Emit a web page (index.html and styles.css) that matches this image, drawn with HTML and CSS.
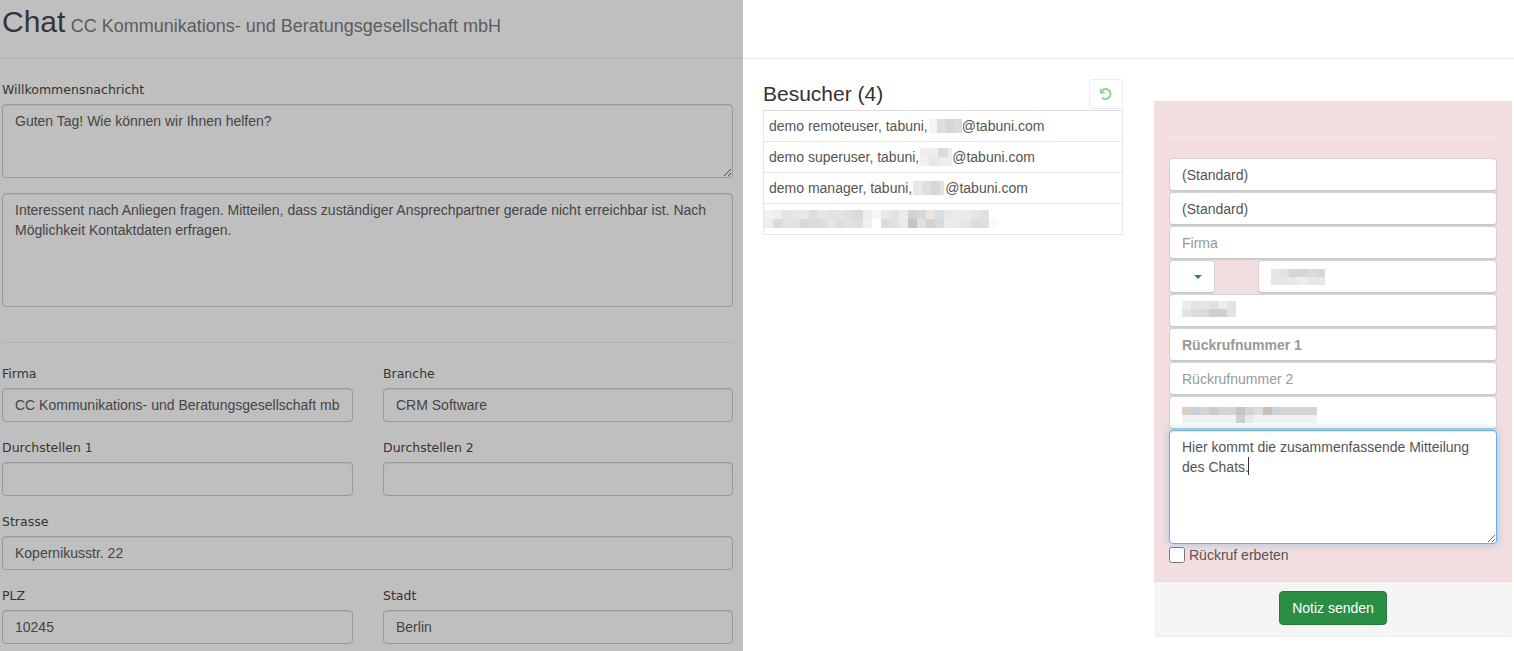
FILE: index.html
```html
<!DOCTYPE html>
<html lang="de">
<head>
<meta charset="utf-8">
<title>Chat</title>
<link rel="stylesheet" href="styles.css">
</head>
<body>
<header class="page-header">
  <h1 class="title">Chat <small class="subtitle">CC Kommunikations- und Beratungsgesellschaft mbH</small></h1>
</header>
<main class="layout">
  <section class="script-col">
    <div class="group">
      <label class="label">Willkommensnachricht</label>
      <textarea class="control area-welcome">Guten Tag! Wie können wir Ihnen helfen?</textarea>
    </div>
    <textarea class="control area-hint">Interessent nach Anliegen fragen. Mitteilen, dass zuständiger Ansprechpartner gerade nicht erreichbar ist. Nach Möglichkeit Kontaktdaten erfragen.</textarea>
    <hr class="rule">
    <div class="form-grid">
      <div class="group"><label class="label">Firma</label><input class="control" value="CC Kommunikations- und Beratungsgesellschaft mbH"></div>
      <div class="group"><label class="label">Branche</label><input class="control" value="CRM Software"></div>
      <div class="group"><label class="label">Durchstellen 1</label><input class="control"></div>
      <div class="group"><label class="label">Durchstellen 2</label><input class="control"></div>
      <div class="group wide"><label class="label">Strasse</label><input class="control" value="Kopernikusstr. 22"></div>
      <div class="group"><label class="label">PLZ</label><input class="control" value="10245"></div>
      <div class="group"><label class="label">Stadt</label><input class="control" value="Berlin"></div>
    </div>
  </section>

  <section class="visitor-col">
    <div class="visitor-head">
      <h3 class="visitor-title">Besucher (4)</h3>
      <button class="refresh" type="button" aria-label="Aktualisieren">
        <svg width="14" height="14" viewBox="0 0 14 14" fill="none"><path d="M3.6 3.2A4.9 4.9 0 1 1 3 10.4" stroke="#5cb85c" stroke-width="2.2"/><path d="M1 1V6.6H6.6Z" fill="#5cb85c"/></svg>
      </button>
    </div>
    <ul class="visitor-list">
      <li class="visitor">demo remoteuser, tabuni,<svg class="mask" width="33" height="14" shape-rendering="crispEdges"><rect width="8" height="14" fill="#f6f5f5"/><rect x="8" width="9" height="14" fill="#dedede"/><rect x="17" width="8" height="14" fill="#d6d6d9"/><rect x="25" width="8" height="14" fill="#dcdadb"/></svg>@tabuni.com</li>
      <li class="visitor">demo superuser, tabuni,<svg class="mask" width="32" height="18" shape-rendering="crispEdges"><rect width="32" height="18" fill="#efeeef"/><rect x="18" width="10" height="9" fill="#dedadb"/><rect x="9" y="9" width="10" height="9" fill="#e6e7ea"/><rect y="9" width="9" height="9" fill="#f3f0f0"/></svg>@tabuni.com</li>
      <li class="visitor">demo manager, tabuni,<svg class="mask" width="32" height="14" shape-rendering="crispEdges"><rect width="31" height="14" fill="#e9e7e8"/><rect x="9" width="9" height="14" fill="#e2dddd"/><rect x="18" width="9" height="14" fill="#d7d9d9"/><rect x="27" width="4" height="14" fill="#e4e4e4"/></svg>@tabuni.com</li>
      <li class="visitor visitor-blur">
        <svg width="236" height="18" shape-rendering="crispEdges">
          <rect width="9" height="9" fill="#f3f0f0"/><rect x="9" width="9" height="9" fill="#efeded"/><rect x="18" width="9" height="9" fill="#e2e3e8"/><rect x="27" width="9" height="9" fill="#e6e5e7"/><rect x="36" width="9" height="9" fill="#ece8e6"/><rect x="45" width="9" height="9" fill="#dedede"/><rect x="54" width="9" height="9" fill="#e6e6e8"/><rect x="63" width="9" height="9" fill="#e2e2e4"/><rect x="72" width="9" height="9" fill="#e6e3e1"/><rect x="81" width="9" height="9" fill="#e0dedd"/><rect x="90" width="9" height="9" fill="#d8d9d9"/><rect x="99" width="9" height="9" fill="#eceded"/><rect x="108" width="9" height="9" fill="#f6f5f3"/><rect x="117" width="9" height="9" fill="#e9e9e9"/><rect x="126" width="9" height="9" fill="#e4e4e4"/><rect x="135" width="9" height="9" fill="#ececec"/><rect x="144" width="9" height="9" fill="#d6d1ce"/><rect x="153" width="9" height="9" fill="#d4d8de"/><rect x="162" width="9" height="9" fill="#e9e5e0"/><rect x="171" width="9" height="9" fill="#d9dee2"/><rect x="180" width="9" height="9" fill="#e8e7e8"/><rect x="189" width="9" height="9" fill="#ececec"/><rect x="198" width="9" height="9" fill="#ebeaea"/><rect x="207" width="9" height="9" fill="#e8e4e2"/><rect x="216" width="9" height="9" fill="#e0e0e2"/>
          <rect y="9" width="9" height="9" fill="#eeeded"/><rect x="9" y="9" width="9" height="9" fill="#d9dade"/><rect x="18" y="9" width="9" height="9" fill="#e2e2e3"/><rect x="27" y="9" width="9" height="9" fill="#e5e2e1"/><rect x="36" y="9" width="9" height="9" fill="#d9d9db"/><rect x="45" y="9" width="9" height="9" fill="#dcdcde"/><rect x="54" y="9" width="9" height="9" fill="#dddddf"/><rect x="63" y="9" width="9" height="9" fill="#e5e5e5"/><rect x="72" y="9" width="9" height="9" fill="#dcdde0"/><rect x="81" y="9" width="9" height="9" fill="#e2e2e4"/><rect x="90" y="9" width="9" height="9" fill="#dfdfe0"/><rect x="99" y="9" width="9" height="9" fill="#f0f0f0"/><rect x="117" y="9" width="9" height="9" fill="#dcdcdb"/><rect x="126" y="9" width="9" height="9" fill="#e2e1e0"/><rect x="135" y="9" width="9" height="9" fill="#ebebeb"/><rect x="144" y="9" width="9" height="9" fill="#c8c3bf"/><rect x="153" y="9" width="9" height="9" fill="#dde0e4"/><rect x="162" y="9" width="9" height="9" fill="#d6d0cb"/><rect x="171" y="9" width="9" height="9" fill="#d8dbde"/><rect x="180" y="9" width="9" height="9" fill="#ebebeb"/><rect x="189" y="9" width="9" height="9" fill="#e9e9e9"/><rect x="198" y="9" width="9" height="9" fill="#e6e6e6"/><rect x="207" y="9" width="9" height="9" fill="#dfdcd9"/><rect x="216" y="9" width="9" height="9" fill="#dfdfe1"/><rect x="225" y="9" width="9" height="9" fill="#f7fafd"/>
        </svg>
      </li>
    </ul>
  </section>

  <section class="note-col">
    <div class="note-panel">
      <div class="note-body">
        <hr class="note-rule">
        <input class="field" value="(Standard)">
        <input class="field" value="(Standard)">
        <input class="field" placeholder="Firma">
        <div class="field-row">
          <button class="field dropdown" type="button" aria-label="Auswahl"><span class="caret"></span></button>
          <div class="field field-phone">
            <svg class="blur-phone" width="54" height="16" shape-rendering="crispEdges"><rect width="54" height="16" fill="#e9e6e6"/><rect x="9" width="9" height="8" fill="#e0e3e8"/><rect x="18" width="18" height="8" fill="#d9d3d3"/><rect x="36" width="9" height="8" fill="#dcdcde"/><rect x="45" width="9" height="8" fill="#d7d7d9"/><rect x="27" y="8" width="9" height="8" fill="#efedec"/></svg>
          </div>
        </div>
        <div class="field">
          <svg class="blur-city" width="54" height="16" shape-rendering="crispEdges"><rect width="54" height="16" fill="#e3e3e3"/><rect width="9" height="8" fill="#ededed"/><rect x="18" width="9" height="8" fill="#e8e6e4"/><rect x="27" width="9" height="8" fill="#dfe0e3"/><rect x="36" width="9" height="8" fill="#eceeee"/><rect x="9" y="8" width="18" height="8" fill="#dcdcdc"/><rect x="27" y="8" width="18" height="8" fill="#cfcfd1"/></svg>
        </div>
        <input class="field placeholder-strong" placeholder="Rückrufnummer 1">
        <input class="field" placeholder="Rückrufnummer 2">
        <div class="field field-mail">
          <svg class="blur-mail" width="135" height="16" shape-rendering="crispEdges"><rect width="135" height="8" fill="#d5d3d3"/><rect y="8" width="135" height="8" fill="#f1f1f1"/><rect width="9" height="8" fill="#d9d0cc"/><rect x="9" width="9" height="8" fill="#c9d0da"/><rect x="27" width="9" height="8" fill="#c8cbd0"/><rect x="54" width="9" height="8" fill="#c4c4c6"/><rect x="72" width="9" height="8" fill="#dadde0"/><rect x="81" width="9" height="8" fill="#c9bfb8"/><rect x="90" width="9" height="8" fill="#ced2d8"/><rect x="54" y="8" width="9" height="8" fill="#cfcfd0"/><rect x="63" y="8" width="9" height="8" fill="#e8e8e8"/></svg>
        </div>
        <div class="message">
          <textarea class="field message-input">Hier kommt die zusammenfassende Mitteilung des Chats.</textarea>
          <span class="cursor"></span>
        </div>
        <label class="callback"><input class="callback-box" type="checkbox"> Rückruf erbeten</label>
      </div>
      <div class="note-footer">
        <button class="send" type="button">Notiz senden</button>
      </div>
    </div>
  </section>
</main>
<div class="backdrop"></div>
</body>
</html>
```

FILE: styles.css
```css
* { box-sizing: border-box; }
html, body { height: 100%; overflow: hidden; }
body {
  margin: 0;
  font-family: "Liberation Sans", Arial, sans-serif;
  font-size: 14px;
  line-height: 20px;
  color: #555;
  background: #fff;
}

/* header */
.page-header {
  height: 59px;
  border-bottom: 1px solid #eee;
  padding: 4px 0 0 2px;
}
.title {
  margin: 0;
  font-size: 30px;
  line-height: 36px;
  font-weight: 500;
  color: #484848;
}
.subtitle { margin-left: -3px; font-size: 18px; font-weight: 400; color: #7c7c7c; }

/* layout */
.layout { display: flex; align-items: flex-start; }
.script-col { width: 743px; flex: none; padding: 20px 10px 0 2px; }
.visitor-col { width: 360px; flex: none; margin: 20px 0 0 20px; }
.note-col { width: 358px; flex: none; margin: 42px 0 0 31px; }

/* left form */
.group { display: block; margin-bottom: 15px; }
.label {
  display: block;
  padding-top: 1px;
  margin-bottom: 4px;
  font-family: "DejaVu Sans", sans-serif;
  font-size: 12.5px;
  line-height: 20px;
  color: #484848;
}
.control {
  display: block;
  width: 100%;
  height: 34px;
  padding: 6px 12px;
  font: 14px/20px "Liberation Sans", Arial, sans-serif;
  color: #5c5c5c;
  background: #fff;
  border: 1px solid #ccc;
  border-radius: 4px;
  box-shadow: inset 0 1px 1px rgba(0, 0, 0, .075);
}
.area-welcome { height: 74px; resize: vertical; }
.area-hint { height: 114px; resize: none; }
.rule { margin: 35px 0 20px; border: 0; border-top: 1px solid #eee; }
.form-grid { display: grid; grid-template-columns: 351px 350px; column-gap: 30px; }
.wide { grid-column: 1 / -1; }

/* visitors */
.visitor-head { display: flex; justify-content: space-between; align-items: flex-start; height: 31px; }
.visitor-title { margin: 2px 0 0; font-size: 21px; line-height: 26px; font-weight: 500; color: #333; }
.refresh {
  display: flex;
  align-items: center;
  justify-content: center;
  width: 34px;
  height: 30px;
  padding: 0;
  background: #fff;
  border: 1px solid #e2e2e2;
  border-radius: 3px;
  opacity: .65;
}
.visitor-list { list-style: none; margin: 0; padding: 0; border-top: 1px solid #ddd; }
.visitor {
  display: flex;
  align-items: center;
  height: 31px;
  padding: 0 5px;
  border: 1px solid #e6e6e6;
  border-top: 0;
}
.mask { flex: none; margin-left: 1px; }
.visitor-blur { padding: 0; }

/* note panel */
.note-panel {
  background: #f2dede;
  border-bottom: 1px solid #ececec;
  border-radius: 0 0 3px 3px;
}
.note-body { padding: 36px 15px 16px; }
.note-rule { margin: 0 0 20px; border: 0; border-top: 1px solid #f7ebeb; }
.field {
  display: block;
  width: 100%;
  height: 33px;
  margin-bottom: 1px;
  padding: 6px 12px;
  font: 14px/20px "Liberation Sans", Arial, sans-serif;
  color: #555;
  background: #fff;
  border: 1px solid #d2d2d2;
  border-bottom-color: #c6c6c6;
  border-radius: 4px;
  box-shadow: 0 1px 0 #d2d0d0;
}
.field svg { display: block; }
.blur-phone { margin-top: 2px; }
.blur-mail { margin-top: 4px; }
.field::placeholder { color: #999; opacity: 1; }
.placeholder-strong::placeholder { font-weight: 700; }
.field-row { display: flex; justify-content: space-between; }
.dropdown { width: 46px; flex: none; display: flex; align-items: center; justify-content: center; padding: 0 0 0 12px; }
.caret { border-top: 4px solid #2b8e45; border-left: 4px solid transparent; border-right: 4px solid transparent; }
.field-phone { width: 239px; flex: none; }
.field-mail { overflow: hidden; }
.message { position: relative; }
.message-input {
  position: relative;
  height: 114px;
  margin: 0;
  resize: vertical;
  border-color: #66afe9;
  outline: 0;
  box-shadow: inset 0 1px 1px rgba(0, 0, 0, .075), 0 0 8px rgba(102, 175, 233, .6);
}
.cursor { position: absolute; left: 79px; top: 27px; width: 1px; height: 18px; background: #333; }
.callback { display: flex; align-items: center; gap: 4px; height: 20px; margin-top: 1px; }
.callback-box { width: 16px; height: 16px; margin: 0; flex: none; }
.note-footer {
  display: flex;
  justify-content: center;
  height: 55px;
  padding-top: 9px;
  background: #f5f5f5;
  border-top: 1px solid #ddd;
}
.send {
  width: 108px;
  height: 34px;
  padding: 0;
  font: 14px/20px "Liberation Sans", Arial, sans-serif;
  color: #fff;
  background: #2b8e45;
  border: 1px solid #257a3b;
  border-radius: 4px;
}

/* backdrop over the left column */
.backdrop {
  position: absolute;
  top: 0;
  left: 0;
  width: 743px;
  height: 100%;
  background: rgba(0, 0, 0, .25);
}
```
